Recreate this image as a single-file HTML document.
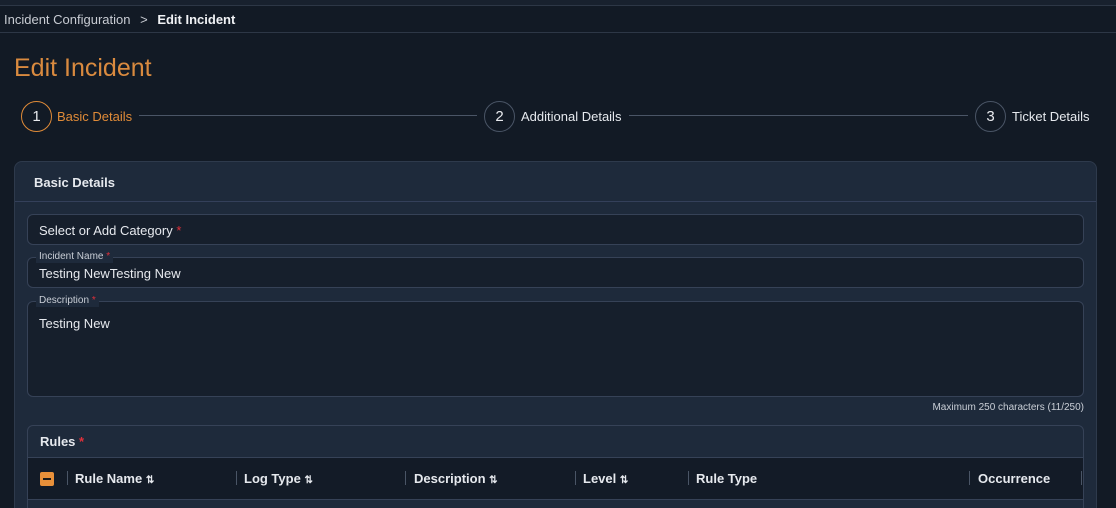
<!DOCTYPE html><html><head><style>
*{box-sizing:border-box;margin:0;padding:0}
html,body{width:1116px;height:508px;overflow:hidden}
body{background:#121a25;font-family:"Liberation Sans",sans-serif;color:#e6e9ee;position:relative}
.a{position:absolute}
.circ{position:absolute;width:31px;height:31px;border-radius:50%;border:1.5px solid #4a5566;display:flex;align-items:center;justify-content:center;font-size:15px;color:#e8eaee}
.inp{position:absolute;left:27px;width:1057px;border:1px solid #364257;border-radius:6px;background:#161f2c}
.lbl{position:absolute;left:8px;top:-7px;font-size:10px;color:#c9ced6;background:#1e2a3b;padding:0 3px;line-height:12px}
.req{color:#e0303a}
.th{position:absolute;top:471px;font-size:13px;font-weight:bold;color:#e6e9ee}
.sep{position:absolute;top:471px;width:1px;height:14px;background:#4a5566}
</style></head><body>
<div class="a" style="left:0;top:0;width:1116px;height:5px;background:#18212e"></div>
<div class="a" style="left:0;top:5px;width:1116px;height:1px;background:#2d3746"></div>
<div class="a" style="left:4px;top:12px;font-size:13px;color:#c8ccd3">Incident Configuration <span style="margin:0 6px">&gt;</span> <b style="color:#f0f2f5">Edit Incident</b></div>
<div class="a" style="left:0;top:32px;width:1116px;height:1px;background:#2d3746"></div>
<div class="a" style="left:14px;top:54px;font-size:25px;color:#d98a3f">Edit Incident</div>
<div class="circ" style="left:21px;top:101px;border-color:#e08b38">1</div>
<div class="a" style="left:57px;top:109px;font-size:13px;color:#e08b38">Basic Details</div>
<div class="a" style="left:139px;top:115px;width:338px;height:1px;background:#4a5566"></div>
<div class="circ" style="left:484px;top:101px">2</div>
<div class="a" style="left:521px;top:109px;font-size:13px">Additional Details</div>
<div class="a" style="left:629px;top:115px;width:339px;height:1px;background:#4a5566"></div>
<div class="circ" style="left:975px;top:101px">3</div>
<div class="a" style="left:1012px;top:109px;font-size:13px">Ticket Details</div>
<div class="a" style="left:14px;top:161px;width:1083px;height:360px;background:#1e2a3b;border:1px solid #2e3a4c;border-radius:8px"></div>
<div class="a" style="left:34px;top:175px;font-size:13px;font-weight:bold">Basic Details</div>
<div class="a" style="left:15px;top:201px;width:1081px;height:1px;background:#34405a"></div>
<div class="inp" style="top:214px;height:31px"><div class="a" style="left:11px;top:8px;font-size:13px">Select or Add Category <span class="req">*</span></div></div>
<div class="inp" style="top:257px;height:31px"><div class="lbl">Incident Name <span class="req">*</span></div><div class="a" style="left:11px;top:8px;font-size:13px">Testing NewTesting New</div></div>
<div class="inp" style="top:301px;height:96px"><div class="lbl">Description <span class="req">*</span></div><div class="a" style="left:11px;top:14px;font-size:13px">Testing New</div></div>
<div class="a" style="right:32px;top:402px;font-size:10px;color:#c9ced6">Maximum 250 characters (11/250)</div>
<div class="a" style="left:27px;top:425px;width:1057px;height:100px;border:1px solid #364257;border-radius:6px;background:#1e2a3b;overflow:hidden">
<div class="a" style="left:0;top:31px;width:1057px;height:43px;background:#131b27;border-top:1px solid #364257;border-bottom:1px solid #364257"></div>
</div>
<div class="a" style="left:40px;top:434px;font-size:13px;font-weight:bold">Rules <span class="req">*</span></div>
<div class="a" style="left:40px;top:472px;width:14px;height:14px;background:#e8903a;border-radius:2px"><div class="a" style="left:3px;top:6px;width:8px;height:2px;background:#1a1a1a"></div></div>
<div class="sep" style="left:67px"></div><div class="th" style="left:75px">Rule Name <span style="font-size:10px">⇅</span></div>
<div class="sep" style="left:236px"></div><div class="th" style="left:244px">Log Type <span style="font-size:10px">⇅</span></div>
<div class="sep" style="left:405px"></div><div class="th" style="left:414px">Description <span style="font-size:10px">⇅</span></div>
<div class="sep" style="left:575px"></div><div class="th" style="left:583px">Level <span style="font-size:10px">⇅</span></div>
<div class="sep" style="left:688px"></div><div class="th" style="left:696px">Rule Type</div>
<div class="sep" style="left:969px"></div><div class="th" style="left:978px">Occurrence</div>
<div class="sep" style="left:1081px"></div>
</body></html>
